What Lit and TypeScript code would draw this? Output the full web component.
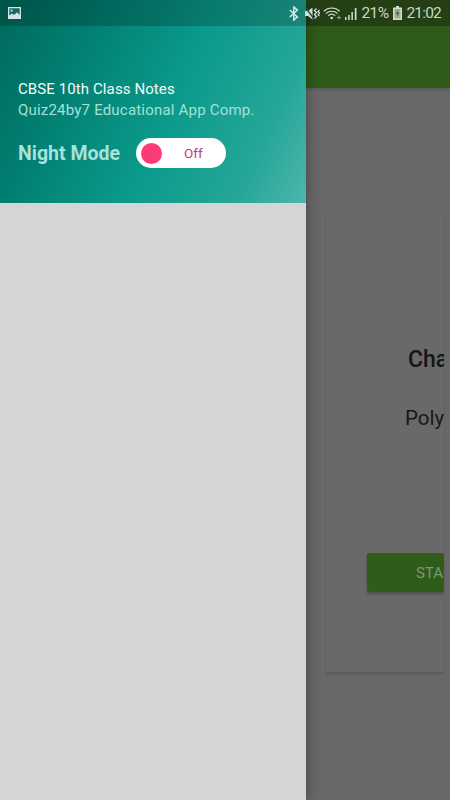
import { LitElement, html, css } from 'lit';
import { customElement } from 'lit/decorators.js';

@customElement('app-root')
export class AppRoot extends LitElement {
  static styles = css`
    :host {
      display: block;
      position: relative;
      width: 450px;
      height: 800px;
      overflow: hidden;
      font-family: Roboto, "Liberation Sans", sans-serif;
      background: #686868;
    }

    /* the app behind the drawer, already dimmed */
    .page {
      height: 800px;
      display: flex;
      flex-direction: column;
    }
    .toolbar {
      height: 88px;
      flex: none;
      background: linear-gradient(#233f13 0 26px, #2f5a19 26px);
      box-shadow: 0 1px 3px rgba(0, 0, 0, 0.2);
    }
    .card {
      margin: 127px 6px 0 326px;
      height: 457px;
      overflow: hidden;
      background: #696969;
      box-shadow: 0 2px 2px rgba(0, 0, 0, 0.14);
      display: flex;
      flex-direction: column;
      white-space: nowrap;
    }
    .chapter {
      margin: 130px 0 0 82px;
      font-size: 23px;
      line-height: 30px;
      font-weight: 500;
      color: #151515;
    }
    .poly {
      margin: 29px 0 0 79px;
      font-size: 20.500px;
      line-height: 28px;
      color: #181818;
    }
    .start {
      margin: 121px 0 0 41px;
      height: 39px;
      flex: none;
      border-radius: 2px;
      background: #2f5c18;
      box-shadow: 0 2px 3px rgba(0, 0, 0, 0.25);
      color: #7f9775;
      font-size: 15px;
      line-height: 41px;
      padding-left: 49px;
    }

    .drawer {
      position: absolute;
      left: 0;
      top: 0;
      bottom: 0;
      width: 306px;
      background: #d5d5d5;
      box-shadow: 2px 0 12px rgba(0, 0, 0, 0.28);
    }
    .head {
      height: 203px;
      box-sizing: border-box;
      padding: 79px 18px 0;
      background: linear-gradient(115deg, #00695c 0%, #017d6f 23%, #0a9a8b 55%, #25a697 82%, #4db6ac 100%);
    }
    .name {
      font-size: 15px;
      line-height: 20px;
      color: #f2fbf9;
      letter-spacing: 0.1px;
    }
    .org {
      font-size: 15px;
      line-height: 20px;
      margin-top: 1px;
      color: #a6e0d8;
      letter-spacing: 0.2px;
    }
    .night {
      display: flex;
      align-items: center;
      gap: 16px;
      margin-top: 18px;
    }
    .night-label {
      font-size: 19.500px;
      font-weight: 700;
      color: #a8e2da;
    }
    .toggle {
      width: 90px;
      height: 30px;
      border-radius: 15px;
      background: #fff;
      display: flex;
      align-items: center;
      padding-left: 5px;
      box-sizing: border-box;
    }
    .knob {
      width: 21px;
      height: 21px;
      border-radius: 50%;
      background: #fb3a77;
    }
    .toggle span {
      margin-left: 22px;
      font-size: 13.500px;
      color: #c2397a;
    }

    /* status bar sits over both drawer and page */
    .status {
      position: absolute;
      left: 0;
      top: 0;
      right: 0;
      height: 26px;
      display: flex;
      align-items: center;
      padding: 0 9px 0 8px;
      color: #ccd6c9;
      font-size: 15.500px;
      letter-spacing: -0.6px;
    }
    .status .left {
      flex: 1;
      display: flex;
    }
    .status .scrim {
      position: absolute;
      left: 0;
      top: 0;
      width: 306px;
      height: 26px;
      background: rgba(0, 0, 0, 0.2);
    }
    .status svg,
    .status span {
      position: relative;
      display: block;
    }
    .icons {
      display: flex;
      align-items: center;
    }
    .mute {
      margin-left: 6px;
    }
    .wifi {
      margin-left: 3px;
    }
    .signal {
      margin-left: 2px;
    }
    .pct {
      margin-left: 4px;
    }
    .batt {
      margin-left: 5px;
    }
    .time {
      margin-left: 4px;
      letter-spacing: -0.8px;
    }
  `;

  render() {
    return html`
      <div class="page">
        <div class="toolbar"></div>
        <div class="card">
          <div class="chapter">Cha</div>
          <div class="poly">Poly</div>
          <div class="start">STA</div>
        </div>
      </div>

      <div class="drawer">
        <div class="head">
          <div class="name">CBSE 10th Class Notes</div>
          <div class="org">Quiz24by7 Educational App Comp.</div>
          <div class="night">
            <div class="night-label">Night Mode</div>
            <div class="toggle"><div class="knob"></div><span>Off</span></div>
          </div>
        </div>
      </div>

      <div class="status">
        <div class="scrim"></div>
        <div class="left">
          <svg width="13" height="12" viewBox="0 0 13 12">
            <path fill="#d5e5e2" d="M0 0h13v12H0z" />
            <path fill="#14695d" d="M1.300 1.300h10.400v6.700L9 5.200 6 8 4 6.500 1.300 8.500z" />
            <circle cx="3.600" cy="3.600" r="1.100" fill="#d5e5e2" />
          </svg>
        </div>
        <div class="icons">
          <!-- bluetooth -->
          <svg width="10" height="15" viewBox="0 0 10 15">
            <path fill="none" stroke="#d5e8e4" stroke-width="1.500" d="M.8 4l7.600 6.900-3.600 3.200V.9l3.600 3.200L.8 11" />
          </svg>
          <!-- muted speaker with vibrate marks -->
          <svg class="mute" width="15" height="13" viewBox="0 0 15 13">
            <path fill="#d3dcd0" d="M0 4h3l4.500-3.500v12L3 9H0z" />
            <path stroke="#1d4a3a" stroke-width="1.300" d="M.5.500l9 12" />
            <path fill="none" stroke="#d3dcd0" stroke-width="1.300" d="M11.500 1.500l-2 2 2 2-2 2 2 2-2 2M14.500 3l-1.500 1.500 1.500 1.500-1.500 1.500 1.500 1.500" />
          </svg>
          <!-- wifi -->
          <svg class="wifi" width="20" height="13" viewBox="0 0 20 13">
            <path fill="none" stroke="#d3dcd0" stroke-width="1.200" d="M.8 4.300c4.500-4.400 11.400-4.400 15.900 0M3 6.500c3.300-3 8.200-3 11.500 0M5.300 8.700c2-1.700 4.900-1.700 6.900 0" />
            <circle cx="8.700" cy="11" r="1.300" fill="#d3dcd0" />
            <path stroke="#8fa587" d="M14 10.500h4M16 8.500v4" />
          </svg>
          <!-- signal -->
          <svg class="signal" width="12" height="13" viewBox="0 0 12 13">
            <path fill="#d3dcd0" d="M0 10h1.500v3H0zM3.200 8h1.500v5H3.200zM6.400 5h1.500v8H6.400zM9.800 1H11.500v12H9.800z" />
          </svg>
          <span class="pct">21%</span>
          <!-- battery -->
          <svg class="batt" width="9" height="14" viewBox="0 0 9 14">
            <path fill="#d3dcd0" d="M3 0h3v1.500h3V14H0V1.500h3z" />
            <path fill="#55724a" d="M1.500 3h6v9.500h-6z" opacity=".45" />
            <path fill="#3f5a36" d="M5.200 3.800L2.700 8h1.800l-.7 3 2.500-4.400H4.500z" />
          </svg>
          <span class="time">21:02</span>
        </div>
      </div>
    `;
  }
}
